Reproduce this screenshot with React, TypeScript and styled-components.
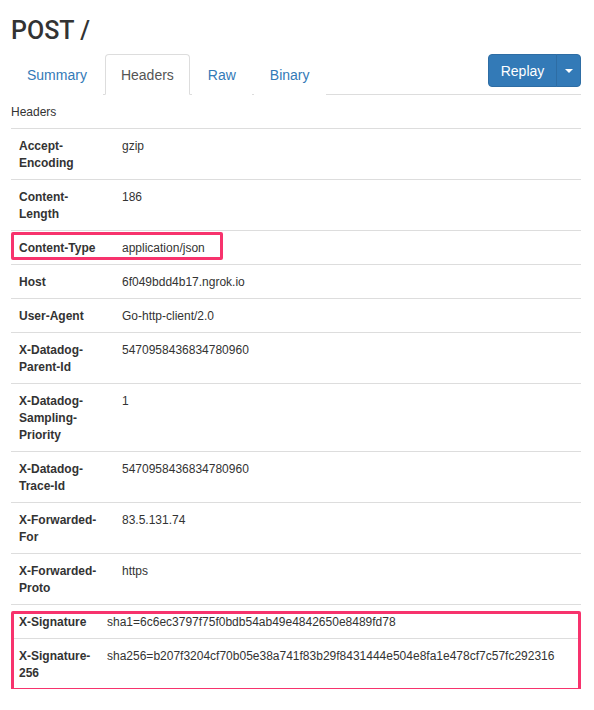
import React from "react";
import styled, { createGlobalStyle } from "styled-components";

const GlobalStyle = createGlobalStyle`
  html, body { margin: 0; padding: 0; background: #fff; }
  body {
    font-family: "Liberation Sans", Arial, Helvetica, sans-serif;
    color: #333;
    font-size: 12px;
  }
`;

const Page = styled.div`
  width: 570px;
  padding: 17px 0 0 11px;
`;

const Title = styled.h3`
  margin: 0 0 10px;
  font-family: Roboto, "Liberation Sans", Arial, sans-serif;
  font-size: 25px;
  line-height: 27px;
  font-weight: 500;
  color: #333;
`;

const TabBar = styled.div`
  display: flex;
  align-items: flex-start;
  border-bottom: 1px solid #ddd;
`;

const Tab = styled.a<{ $active?: boolean }>`
  display: block;
  margin: 0 2px -1px 0;
  padding: 10px 15px 9px;
  font-size: 14px;
  line-height: 20px;
  border: 1px solid ${(p) => (p.$active ? "#ddd" : "transparent")};
  border-bottom-color: ${(p) => (p.$active ? "#fff" : "transparent")};
  border-radius: 4px 4px 0 0;
  color: ${(p) => (p.$active ? "#555" : "#337ab7")};
  background: #fff;
  cursor: pointer;
  text-decoration: none;
`;

const BtnGroup = styled.div`
  display: flex;
  margin: 0 0 0 auto;
`;

const Btn = styled.button<{ $caret?: boolean }>`
  display: flex;
  align-items: center;
  justify-content: center;
  height: 33px;
  padding: ${(p) => (p.$caret ? "0 8px" : "0 12px")};
  width: ${(p) => (p.$caret ? "25px" : "69px")};
  font-family: inherit;
  font-size: 14px;
  line-height: 20px;
  color: #fff;
  background: #337ab7;
  border: 1px solid #2e6da4;
  border-radius: ${(p) => (p.$caret ? "0 4px 4px 0" : "4px 0 0 4px")};
  margin-left: ${(p) => (p.$caret ? "-1px" : "0")};
  cursor: pointer;
`;

const Caret = styled.span`
  display: block;
  width: 0;
  height: 0;
  border-top: 4px solid #fff;
  border-left: 4px solid transparent;
  border-right: 4px solid transparent;
  margin-top: 1px;
`;

const Caption = styled.div`
  padding: 9px 0 7px;
  line-height: 17px;
  font-size: 12px;
  color: #333;
`;

const Section = styled.div`
  position: relative;
`;

const Table = styled.table`
  width: 570px;
  border-collapse: collapse;
  table-layout: fixed;
`;

const Cell = styled.td<{ $head?: boolean }>`
  position: relative;
  padding: 9px 8px 7px;
  border-top: 1px solid #ddd;
  vertical-align: top;
  line-height: 17px;
  font-size: 12px;
  font-weight: ${(p) => (p.$head ? 700 : 400)};
  color: #333;
  white-space: ${(p) => (p.$head ? "normal" : "nowrap")};
`;

const Highlight = styled.div`
  position: absolute;
  box-sizing: border-box;
  border: 3px solid #f7336d;
  border-radius: 2px;
  pointer-events: none;
`;

const CellMark = styled(Highlight)`
  top: 1px;
  left: 0;
  width: 212px;
  height: 28px;
`;

const SectionMark = styled(Highlight)`
  top: 7px;
  left: 0;
  right: 0;
  bottom: -2px;
`;

type Row = { k: string; v: string; mark?: boolean };

const rows: Row[] = [
  { k: "Accept-Encoding", v: "gzip" },
  { k: "Content-Length", v: "186" },
  { k: "Content-Type", v: "application/json", mark: true },
  { k: "Host", v: "6f049bdd4b17.ngrok.io" },
  { k: "User-Agent", v: "Go-http-client/2.0" },
  { k: "X-Datadog-Parent-Id", v: "5470958436834780960" },
  { k: "X-Datadog-Sampling-Priority", v: "1" },
  { k: "X-Datadog-Trace-Id", v: "5470958436834780960" },
  { k: "X-Forwarded-For", v: "83.5.131.74" },
  { k: "X-Forwarded-Proto", v: "https" },
];

const sigRows: Row[] = [
  { k: "X-Signature", v: "sha1=6c6ec3797f75f0bdb54ab49e4842650e8489fd78" },
  {
    k: "X-Signature-256",
    v: "sha256=b207f3204cf70b05e38a741f83b29f8431444e504e8fa1e478cf7c57fc292316",
  },
];

export default function App() {
  return (
    <>
      <GlobalStyle />
      <Page>
        <Title>POST /</Title>
        <TabBar>
          <Tab>Summary</Tab>
          <Tab $active>Headers</Tab>
          <Tab>Raw</Tab>
          <Tab>Binary</Tab>
          <BtnGroup>
            <Btn>Replay</Btn>
            <Btn $caret>
              <Caret />
            </Btn>
          </BtnGroup>
        </TabBar>
        <Caption>Headers</Caption>
        <Table>
          <colgroup>
            <col style={{ width: "103px" }} />
            <col />
          </colgroup>
          <tbody>
            {rows.map((r) => (
              <tr key={r.k}>
                <Cell $head>
                  {r.mark && <CellMark />}
                  {r.k}
                </Cell>
                <Cell>{r.v}</Cell>
              </tr>
            ))}
          </tbody>
        </Table>
        <Section>
          <Table>
            <colgroup>
              <col style={{ width: "88px" }} />
              <col />
            </colgroup>
            <tbody>
              {sigRows.map((r) => (
                <tr key={r.k}>
                  <Cell $head>{r.k}</Cell>
                  <Cell>{r.v}</Cell>
                </tr>
              ))}
            </tbody>
          </Table>
          <SectionMark />
        </Section>
      </Page>
    </>
  );
}
